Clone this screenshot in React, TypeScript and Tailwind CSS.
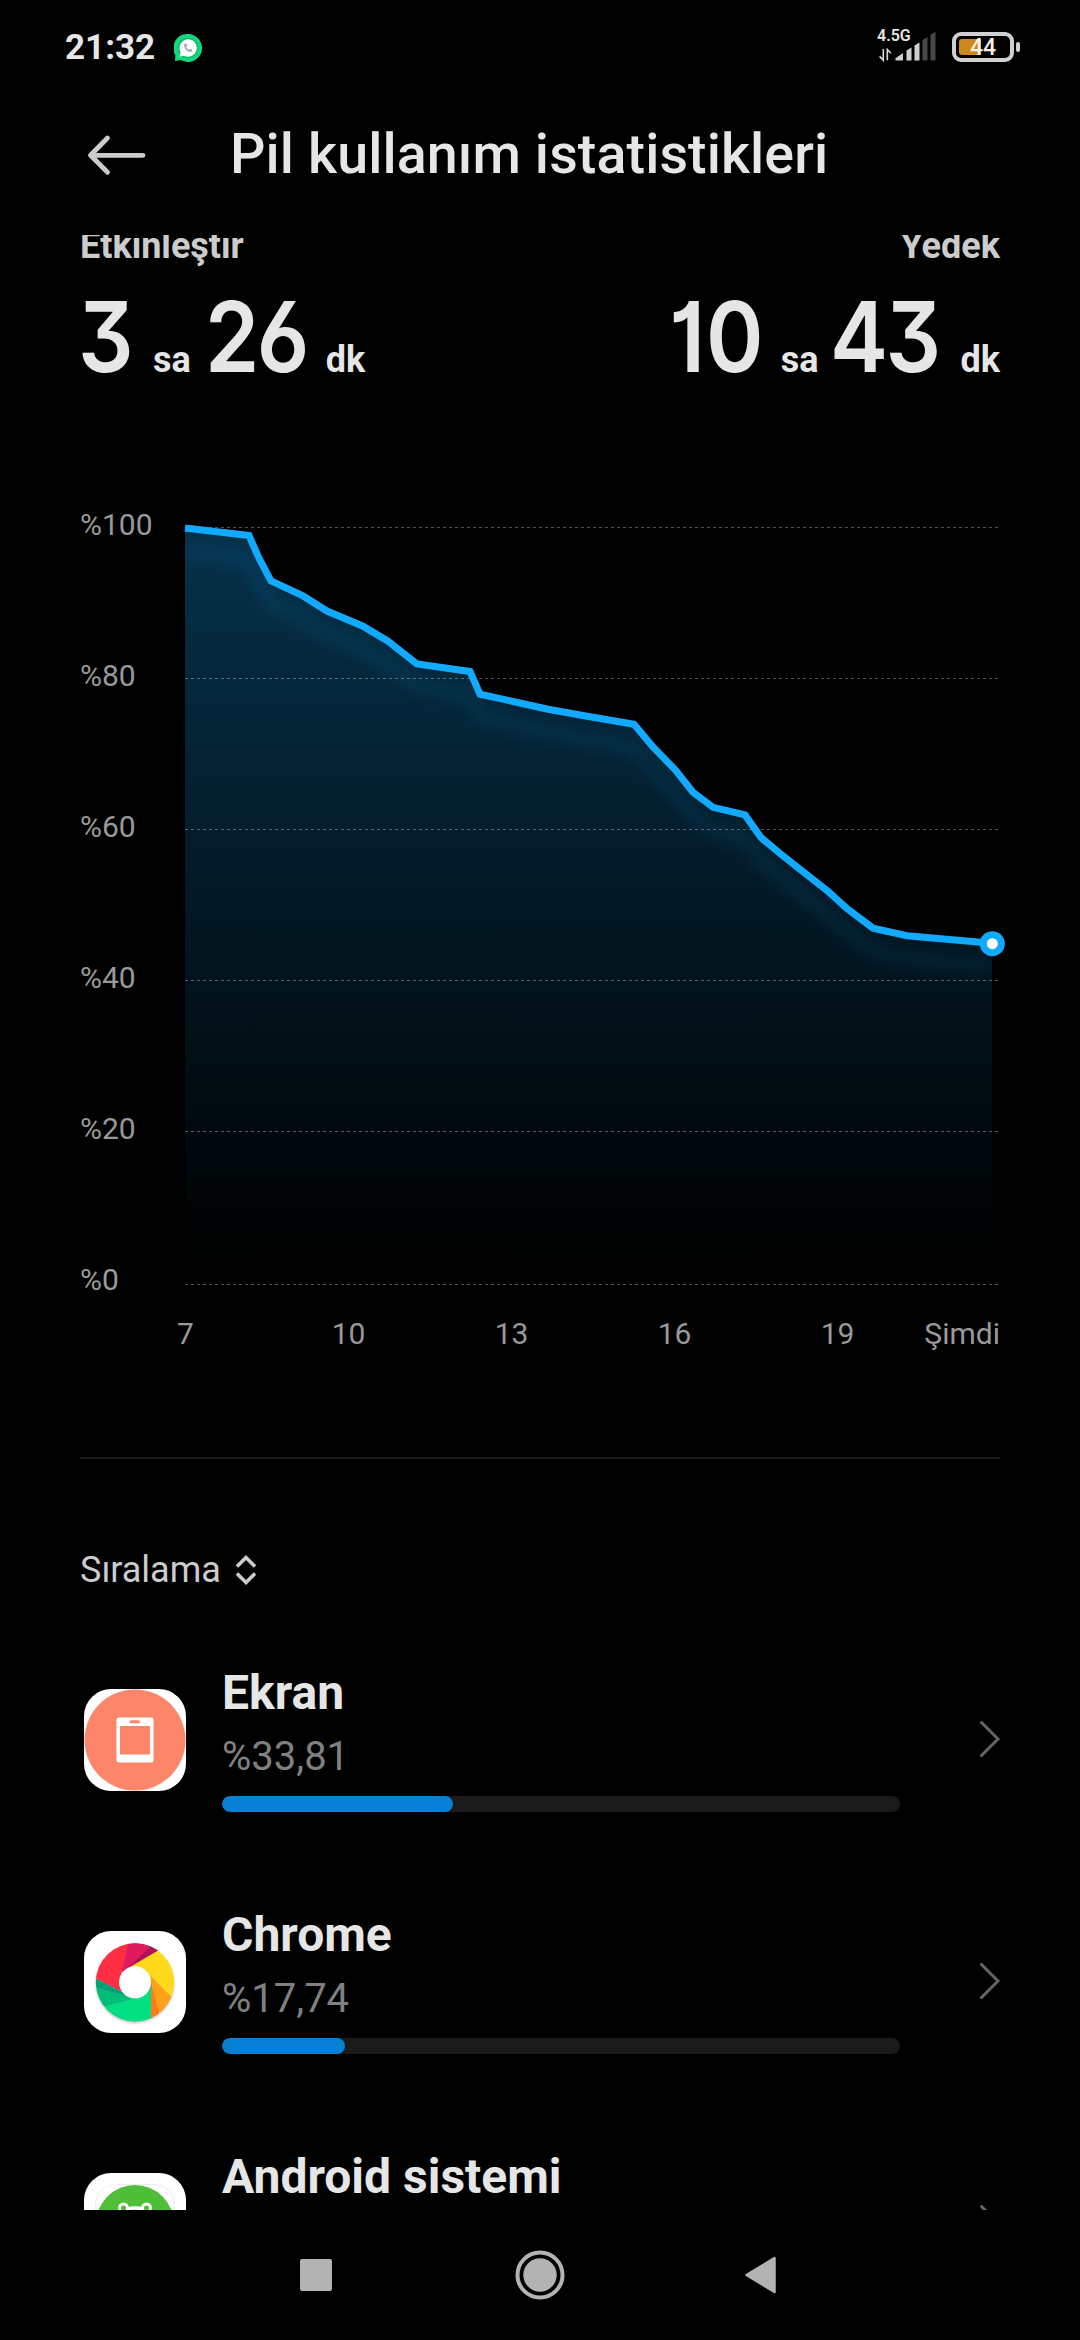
import * as React from "react";

type UsageRow = {
  id: string;
  title: string;
  percent?: string;
  fill: number;
  icon: React.ReactNode;
};

// [x offset in the plot, battery level]
const LEVELS: [number, number][] = [
  [0, 100], [64, 99], [74, 96], [86, 93], [118, 91], [142, 89], [178, 87], [203, 85], [232, 82],
  [285, 81], [295, 78], [363, 76], [405, 75], [449, 74], [468, 71], [490, 68], [508, 65], [528, 63],
  [560, 62], [576, 59], [594, 57], [613, 55], [642, 52], [662, 49.6], [688, 47], [722, 46], [807, 45],
];

const TOP = 22;
const STEP = 7.55;
const levelY = (level: number) => TOP + (100 - level) * STEP;
const LINE = LEVELS.map(([x, l]) => `${x},${levelY(l)}`).join(" ");
const AREA = `0,778 ${LINE} 807,778`;
const GRID = [21.5, 172.5, 323.5, 474.5, 625.5, 778.5];

function WhatsAppIcon() {
  return (
    <svg width="28" height="28" viewBox="0 0 28 28">
      <path d="M14 0a14 14 0 1 1-7 26.1L1 27l.4-5.8A14 14 0 0 1 14 0Z" fill="#0fd97c" />
      <circle cx="14" cy="14" r="10.2" fill="#0bb868" />
      <path d="M14 5.2a8.8 8.8 0 1 1-4.1 16.6L5.6 22.6l1-4.2A8.8 8.8 0 0 1 14 5.2Z" fill="#fff" />
      <path d="M11.2 10.6c-.6 3.6 2.2 6.6 5.8 6.2" fill="none" stroke="#a9b2bd" strokeWidth="2" />
      <circle cx="11.6" cy="11.2" r="1.6" fill="#a9b2bd" />
      <circle cx="16.6" cy="16.4" r="1.6" fill="#a9b2bd" />
    </svg>
  );
}

function SignalIcon() {
  return (
    <svg width="60" height="18" viewBox="0 0 60 18" className="overflow-visible">
      <g stroke="#d9d9d9" strokeWidth="1.6" fill="none">
        <path d="M4.3 6v11.2L.6 13.4" />
        <path d="M8.3 17.2V6.4l3.6 3.8" />
      </g>
      <g fill="#d0d0d0">
        <path d="M16.5 17.5v-2.2l7.5-5.4v7.6z" />
        <path d="M27.5 17.5V7.6l5-3v12.9z" />
        <path d="M35.5 17.5V2.6l5-3v17.9z" />
      </g>
      <g fill="#484848">
        <path d="M43.5 17.5V-2.9l5-3v23.4z" />
        <path d="M51.5 17.5V-8.2l5-3v28.7z" />
      </g>
    </svg>
  );
}

function StatusBar() {
  return (
    <div className="flex h-[95px] shrink-0 items-start justify-between pl-[65px] pr-[60px]">
      <div className="flex items-center pt-[27px]">
        <span className="text-[35px] leading-[42px] font-bold text-[#e6e6e6]">21:32</span>
        <span className="ml-[19px]"><WhatsAppIcon /></span>
      </div>
      <div className="flex pt-[28px]">
        <div className="flex w-[75px] flex-col">
          <span className="text-[16px] leading-[16px] font-semibold text-[#e6e6e6]">4.5G</span>
          <span className="ml-[2px] -mt-px"><SignalIcon /></span>
        </div>
        <div className="mt-[4px] flex h-[30px] items-center gap-[2px]">
          <div className="relative h-[30px] w-[62px] rounded-[9px] border-4 border-[#d0d0d0]">
            <div className="absolute left-[3px] top-[3px] h-4 w-[22px] rounded-l-[3px] bg-[#ca881d]" />
            <span className="absolute left-[14px] -top-[2px] text-[23px] leading-[27px] font-medium text-[#f5efe2]">44</span>
          </div>
          <div className="h-[10px] w-1 rounded-full bg-[#d0d0d0]" />
        </div>
      </div>
    </div>
  );
}

function Header() {
  return (
    <header className="flex h-[140px] shrink-0 items-start pl-[87px]">
      <svg width="60" height="44" viewBox="0 0 60 44" className="mt-[38px]">
        <path d="M20.5 5 3.5 22.3l17 17M3.5 22.3h52.5" fill="none" stroke="#ccc" strokeWidth="4.8" strokeLinecap="round" strokeLinejoin="round" />
      </svg>
      <h1 className="ml-[83px] mt-[26px] text-[55.6px] leading-[66px] font-medium tracking-[.1px] text-[#e6e6e6]">Pil kullanım istatistikleri</h1>
    </header>
  );
}

function Digits({ value, className }: { value: string; className: string }) {
  return (
    <span className={`inline-block origin-left scale-x-[.89] font-[Inter,sans-serif] text-[98px] leading-[100px] font-[560] [font-feature-settings:'cv01','cv03','cv09'] ${className}`}>
      {value}
    </span>
  );
}

function Duration({ label, hours, minutes, right }: { label: string; hours: string; minutes: string; right?: boolean }) {
  return (
    <div className={right ? "flex flex-col items-end" : "flex flex-col items-start"}>
      <span className="text-[36px] leading-[42px] font-bold text-[#ccc]">{label}</span>
      <div className="mt-[20px] flex items-baseline text-[36px] font-bold text-[#e6e6e6]">
        <span className={right ? "w-[112px]" : "-ml-[2px] w-[75px]"}>
          <Digits value={hours} className={right ? "tracking-[1px]" : "tracking-[-3px]"} />
        </span>
        <span>sa</span>
        <span className={right ? "ml-[11px] w-[131px]" : "ml-[14px] w-[121px]"}>
          <Digits value={minutes} className="tracking-[-3px]" />
        </span>
        <span>dk</span>
      </div>
    </div>
  );
}

function BatteryChart() {
  return (
    <section className="mt-[119px]">
      <div className="flex">
        <div className="mt-px flex h-[791px] w-[105px] flex-col justify-between text-[30px] leading-[36px] text-[#999]">
          {["%100", "%80", "%60", "%40", "%20", "%0"].map((t) => (
            <span key={t}>{t}</span>
          ))}
        </div>
        <svg width="815" height="791" viewBox="0 0 815 791" className="overflow-visible">
          <defs>
            <linearGradient id="fill" x1="0" y1="22" x2="0" y2="765" gradientUnits="userSpaceOnUse">
              <stop offset="0" stopColor="#12aaff" stopOpacity=".29" />
              <stop offset="1" stopColor="#12aaff" stopOpacity="0" />
            </linearGradient>
            <clipPath id="area"><polygon points={AREA} /></clipPath>
            <filter id="glow" x="-10%" y="-10%" width="120%" height="130%"><feGaussianBlur stdDeviation="8" /></filter>
          </defs>
          <polygon points={AREA} fill="url(#fill)" />
          <g clipPath="url(#area)">
            <polyline points={LINE} transform="translate(0 23)" fill="none" stroke="#12aaff" strokeOpacity=".15" strokeWidth="9" filter="url(#glow)" />
          </g>
          {GRID.map((y) => (
            <line key={y} x1="0" x2="813" y1={y} y2={y} stroke="#fff" strokeOpacity=".32" strokeDasharray="3 3" />
          ))}
          <polyline points={LINE} fill="none" stroke="#12aaff" strokeWidth="7" />
          <circle cx="807.3" cy="437.7" r="12.5" fill="#12aaff" />
          <circle cx="807.3" cy="437.7" r="5.5" fill="#fff" />
        </svg>
      </div>
      <div className="mt-[18px] flex pl-[24px] text-[30px] leading-[36px] text-[#999]">
        {["7", "10", "13", "16", "19"].map((t) => (
          <span key={t} className="w-[163px] shrink-0 text-center">{t}</span>
        ))}
        <span className="ml-auto">Şimdi</span>
      </div>
    </section>
  );
}

function ScreenIcon() {
  return (
    <svg width="102" height="102" viewBox="0 0 102 102">
      <circle cx="51" cy="51" r="50.5" fill="#fb866a" />
      <rect x="32.5" y="28.5" width="37" height="45" rx="2.5" fill="#fff" />
      <rect x="36" y="37" width="30" height="28.5" fill="#fb866a" />
      <rect x="45.5" y="31.3" width="10.5" height="3" rx="1.5" fill="#fb866a" />
    </svg>
  );
}

function ChromeIcon() {
  return (
    <svg width="102" height="102" viewBox="72 92 306 306">
      <defs>
        <clipPath id="disc"><circle cx="225" cy="246" r="117.5" /></clipPath>
        <filter id="soft" x="-20%" y="-20%" width="140%" height="140%"><feGaussianBlur stdDeviation="5" /></filter>
      </defs>
      <circle cx="225" cy="251" r="116" fill="#000" opacity=".3" filter="url(#soft)" />
      <g clipPath="url(#disc)">
        <path d="M60 100h250L292 152 183 215 225 294 108 235 60 211z" fill="#ff2e42" />
        <path d="M209 110 186 216 225 200 292 152 320 110z" fill="#df1a5e" />
        <path d="M300 110 205 203 292 152 330 130z" fill="#ad1457" />
        <path d="M370 107 292 152 200 206 260 260 273 230 390 346z" fill="#ffd91b" />
        <path d="M390 346 272 228V400h80z" fill="#ffa01a" />
        <path d="M311 385 272 245V400z" fill="#ff7a1a" />
        <path d="M273 400V250L225 294 100 329v90z" fill="#00e083" />
        <path d="M60 340 225 294 60 249z" fill="#00bd78" />
        <path d="M60 249 225 294 60 211z" fill="#00a074" />
      </g>
      <circle cx="225" cy="246" r="48" fill="#fff" />
    </svg>
  );
}

function AndroidIcon() {
  return (
    <svg width="102" height="102" viewBox="0 0 102 102">
      <rect x="11.5" y="11.5" width="79" height="79" rx="20" fill="none" stroke="#ececec" />
      <circle cx="51" cy="51" r="39" fill="#4fbf38" />
      <rect x="39" y="35" width="24" height="26" rx="10" fill="none" stroke="#fff" strokeWidth="3.4" />
      <circle cx="39.5" cy="35" r="4" fill="#4fbf38" stroke="#fff" strokeWidth="3" />
      <circle cx="62.5" cy="35" r="4" fill="#4fbf38" stroke="#fff" strokeWidth="3" />
    </svg>
  );
}

const ROWS: UsageRow[] = [
  { id: "screen", title: "Ekran", percent: "%33,81", fill: 231, icon: <ScreenIcon /> },
  { id: "chrome", title: "Chrome", percent: "%17,74", fill: 123, icon: <ChromeIcon /> },
  { id: "android", title: "Android sistemi", fill: 63, icon: <AndroidIcon /> },
];

function UsageList() {
  return (
    <ul className="mt-[26px]">
      {ROWS.map((r) => (
        <li key={r.id} className="flex h-[242px] items-center pl-1">
          <div className="mt-[3px] h-[102px] w-[102px] shrink-0 overflow-hidden rounded-[27px] bg-white">{r.icon}</div>
          <div className="ml-9 w-[678px]">
            <p className="text-[48px] leading-[56px] font-bold text-[#e6e6e6]">{r.title}</p>
            <p className="mt-[13px] h-[46px] text-[40px] leading-[46px] text-[#808080]">{r.percent}</p>
            <div className="mt-4 h-4 overflow-hidden rounded-full bg-[#1a1a1a]">
              <div className="h-full rounded-full bg-[#0680d4]" style={{ width: r.fill }} />
            </div>
          </div>
          <svg width="22" height="40" viewBox="0 0 22 40" className="mt-[2px] ml-auto">
            <path d="M3.5 3.5 20 20 3.5 36.5" fill="none" stroke="#666" strokeWidth="3" strokeLinecap="round" />
          </svg>
        </li>
      ))}
    </ul>
  );
}

function NavBar() {
  return (
    <nav className="flex h-[130px] shrink-0 items-center justify-between pl-[300px] pr-[304px]">
      <div className="h-8 w-8 rounded-[2px] bg-[#b3b3b3]" />
      <svg width="50" height="50" viewBox="0 0 50 50" className="ml-[2px]">
        <circle cx="25" cy="25" r="22.5" fill="none" stroke="#b3b3b3" strokeWidth="4" />
        <circle cx="25" cy="25" r="16.7" fill="#b3b3b3" />
      </svg>
      <svg width="31" height="38" viewBox="0 0 31 38">
        <path d="M1.5 19 29.5 2v34z" fill="#b3b3b3" stroke="#b3b3b3" strokeWidth="2.5" strokeLinejoin="round" />
      </svg>
    </nav>
  );
}

export default function App() {
  return (
    <div className="flex h-[2340px] w-[1080px] flex-col overflow-hidden bg-black font-[Roboto,sans-serif]">
      <StatusBar />
      <Header />
      <main className="h-[1975px] shrink-0 overflow-hidden px-20">
        <div className="-mt-[10px] flex justify-between">
          <Duration label="Etkinleştir" hours="3" minutes="26" />
          <Duration label="Yedek" hours="10" minutes="43" right />
        </div>
        <BatteryChart />
        <div className="mt-[105px] h-[2px] bg-[#1c1c1c]" />
        <div className="mt-[90px] flex items-center gap-[13px]">
          <span className="text-[36px] leading-[42px] text-[#ccc]">Sıralama</span>
          <svg width="24" height="32" viewBox="0 0 24 32">
            <path d="M3 12.5 12 3.5l9 9M3 19.5l9 9 9-9" fill="none" stroke="#ccc" strokeWidth="3.6" />
          </svg>
        </div>
        <UsageList />
      </main>
      <NavBar />
    </div>
  );
}
